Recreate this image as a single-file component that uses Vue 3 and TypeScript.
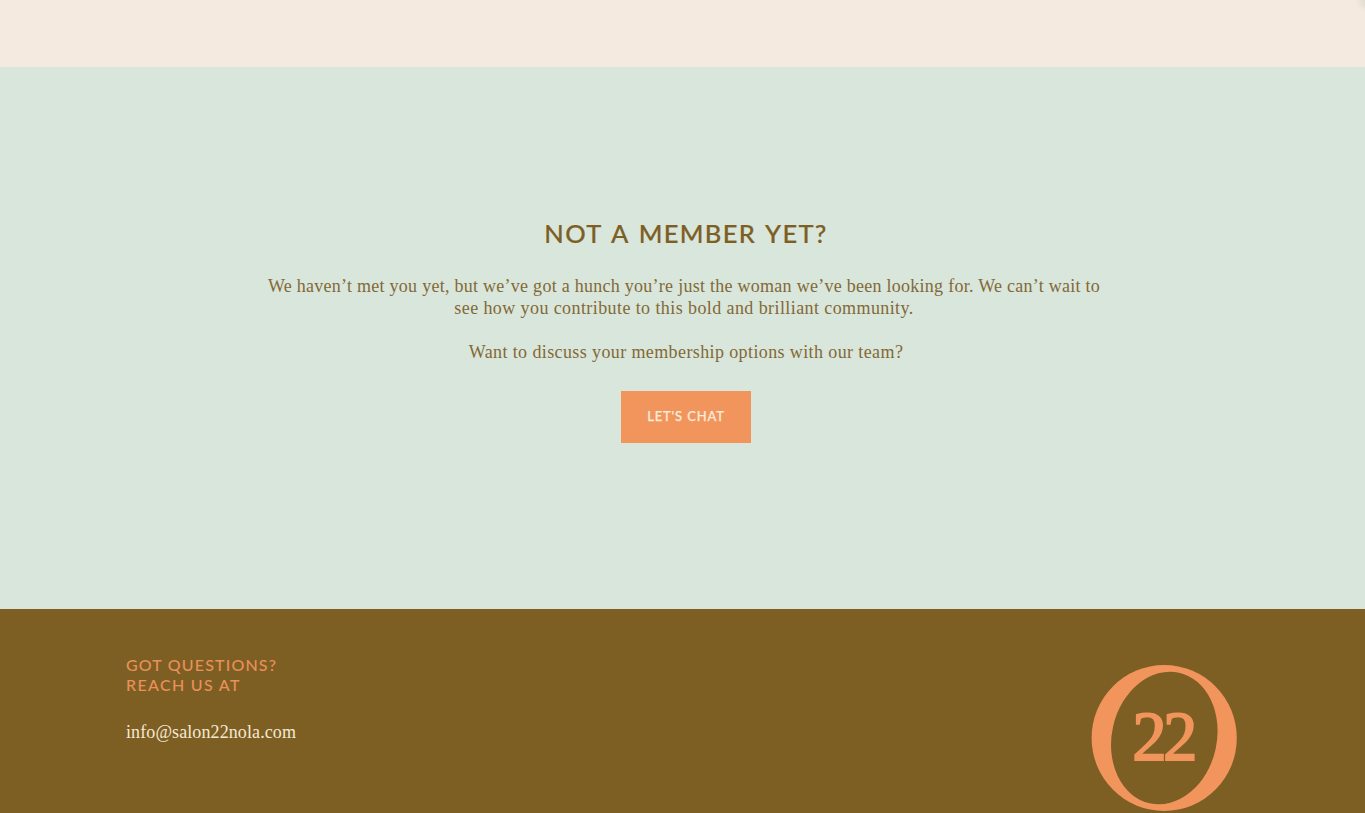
<script setup lang="ts">
const email: string = 'info@salon22nola.com'
</script>

<template>
  <div class="page">
    <div class="strip"><i class="smudge"></i></div>
    <section class="member">
      <h2>NOT A MEMBER YET?</h2>
      <p class="copy">
        <span class="line l1">We haven’t met you yet, but we’ve got a hunch you’re just the woman we’ve been looking for. We can’t wait to</span>
        <span class="line l2">see how you contribute to this bold and brilliant community.</span>
      </p>
      <p class="copy"><span class="line l3">Want to discuss your membership options with our team?</span></p>
      <a class="chat">LET'S CHAT</a>
    </section>
    <footer>
      <div class="contact">
        <h3><span class="q1">GOT QUESTIONS?</span><br /><span class="q2">REACH US AT</span></h3>
        <a class="mail">{{ email }}</a>
      </div>
      <svg class="logo" width="150" height="150" viewBox="0 0 150 150">
        <defs>
          <mask id="ring">
            <rect width="150" height="150" fill="#fff" />
            <ellipse cx="75.3" cy="75" rx="52.5" ry="66.9" transform="rotate(12.7 75.3 75)" fill="#000" />
          </mask>
        </defs>
        <ellipse cx="75.2" cy="75" rx="72.6" ry="73" mask="url(#ring)" />
        <text x="43.3" y="97">22</text>
      </svg>
    </footer>
  </div>
</template>

<style>
body { margin: 0; overflow: hidden; }
</style>
<style scoped>
.page { height: 813px; display: flex; flex-direction: column; overflow: hidden; background: #7d5f24; }
.strip { height: 67px; flex: none; background: #f4eae0; position: relative; overflow: hidden; }
.smudge { position: absolute; right: -6px; top: -8px; width: 12px; height: 16px; border-radius: 50%; background: #e6ddd2; filter: blur(2px); }
.member { height: 542px; flex: none; box-sizing: border-box; padding: 150px 0 0 7px; background: #d8e6dc; display: flex; flex-direction: column; align-items: center; color: #7d5f24; }
h2, h3, p { margin: 0; }
h2 { font: 500 25.5px/32px Lato, "Liberation Sans", sans-serif; letter-spacing: 1.3px; word-spacing: 2.2px; margin-bottom: 26px; white-space: nowrap; -webkit-text-stroke: 0.2px #7d5f24; }
.copy { font: 18px/22px "Liberation Serif", serif; text-align: center; margin-bottom: 22px; color: #836936; }
.line { display: block; white-space: nowrap; }
.l1 { letter-spacing: 0.267px; margin-right: 4px; }
.l2 { letter-spacing: 0.41px; margin-right: 4px; }
.l3 { letter-spacing: 0.39px; }
.chat { width: 130px; height: 52px; margin-top: 6px; background: #f1955c; color: #f9eadb; font: 500 13px/51px Lato, "Liberation Sans", sans-serif; letter-spacing: 0.85px; text-align: center; -webkit-text-stroke: 0.25px #f9eadb; }
footer { flex: 1; min-height: 0; display: flex; justify-content: space-between; padding: 0 126px; }
.contact { padding-top: 46px; }
h3 { font: 500 16px/20px Lato, "Liberation Sans", sans-serif; color: #ea9059; white-space: nowrap; }
.q1 { letter-spacing: 1.17px; }
.q2 { letter-spacing: 1.33px; }
.mail { display: block; margin-top: 26px; font: 18px/22px "Liberation Serif", serif; color: #f6e8d2; letter-spacing: 0.1px; }
.logo { margin-top: 54px; flex: none; fill: #f1955c; }
.logo text { font: 69px "Liberation Serif", serif; letter-spacing: -3.8px; stroke: #f1955c; stroke-width: 1.8px; }
</style>
